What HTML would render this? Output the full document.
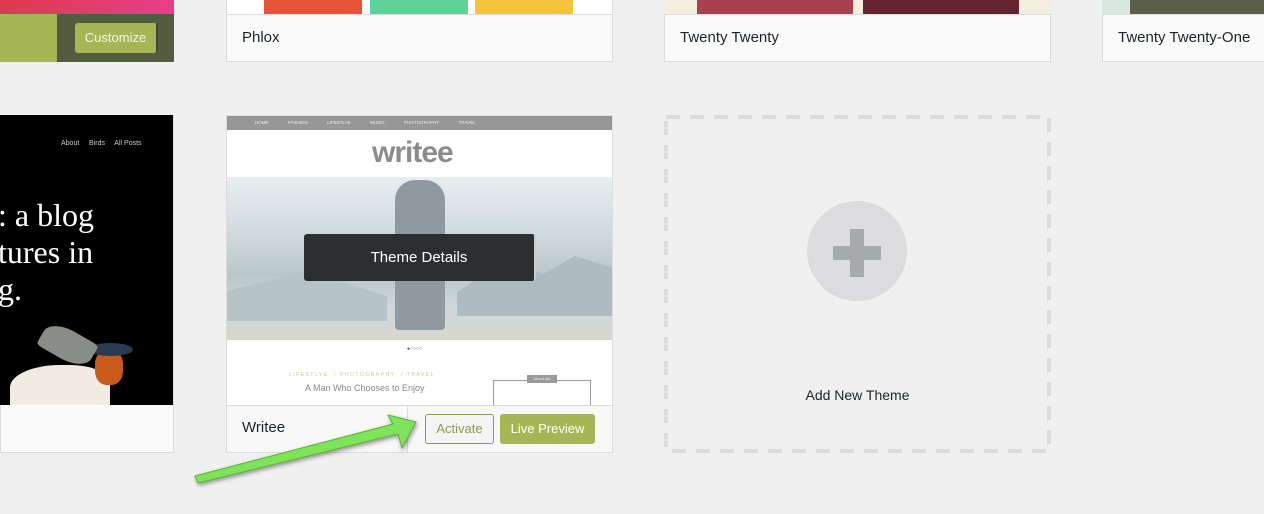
<!DOCTYPE html>
<html><head><style>
body{margin:0;width:1264px;height:514px;background:#f0f0f1;position:relative;overflow:hidden;font-family:"Liberation Sans",sans-serif}
.a{position:absolute;box-sizing:border-box}
.card{border:1px solid #dcdcde;background:#fafafa}
.name{font-size:15px;color:#1d2327;}
</style></head><body>
<div class="a" style="left:0;top:0;width:174px;height:14px;background:linear-gradient(110deg,#dd3a4a,#e83e8c)"></div>
<div class="a" style="left:0;top:14px;width:57px;height:48px;background:#a7b654"></div>
<div class="a" style="left:57px;top:14px;width:117px;height:48px;background:#535c3f"></div>
<div class="a" style="left:75px;top:23px;width:83px;height:30px;background:#a7b654;border-radius:3px;color:#f4f6e8;font-size:13px;line-height:30px;text-align:center;border-right:2px solid #444">Customize</div>
<div class="a" style="left:226px;top:0;width:387px;height:15px;background:#fff;border:1px solid #dcdcde;border-top:0"></div>
<div class="a" style="left:264px;top:0;width:98px;height:14px;background:#e4543a"></div>
<div class="a" style="left:370px;top:0;width:98px;height:14px;background:#5fd29a"></div>
<div class="a" style="left:475px;top:0;width:98px;height:14px;background:#f4c43e"></div>
<div class="a card" style="left:226px;top:14px;width:387px;height:48px"><div class="name" style="position:absolute;left:15px;top:14px">Phlox</div></div>
<div class="a" style="left:664px;top:0;width:387px;height:15px;background:#f3eedf"></div>
<div class="a" style="left:697px;top:0;width:156px;height:14px;background:#a8404f"></div>
<div class="a" style="left:863px;top:0;width:156px;height:14px;background:#632430"></div>
<div class="a card" style="left:664px;top:14px;width:387px;height:48px"><div class="name" style="position:absolute;left:15px;top:14px">Twenty Twenty</div></div>
<div class="a" style="left:1102px;top:0;width:162px;height:15px;background:#d9e8de"></div>
<div class="a" style="left:1130px;top:0;width:134px;height:14px;background:#5a5e47"></div>
<div class="a card" style="left:1102px;top:14px;width:170px;height:48px"><div class="name" style="position:absolute;left:15px;top:14px;white-space:nowrap">Twenty Twenty-One</div></div>
<div class="a" style="left:0;top:115px;width:174px;height:338px;border:1px solid #dcdcde;background:#fafafa"></div>
<div class="a" style="left:0;top:115px;width:173px;height:290px;background:#000;overflow:hidden">
<div style="position:absolute;left:61px;top:25px;color:#ccc;font-size:7px;white-space:nowrap">About &nbsp;&nbsp;&nbsp; Birds &nbsp;&nbsp;&nbsp; All Posts</div>
<div style="position:absolute;left:-2px;top:82px;color:#fff;font-family:'Liberation Serif',serif;font-size:32px;line-height:37px;white-space:nowrap">: a blog<br>tures in<br>g.</div>
<div style="position:absolute;left:10px;top:250px;width:100px;height:45px;background:#f1ece2;border-radius:50% 40% 0 0"></div>
<div style="position:absolute;left:95px;top:235px;width:28px;height:35px;background:#c85a1c;border-radius:40%"></div>
<div style="position:absolute;left:88px;top:228px;width:45px;height:13px;background:#2a3a50;border-radius:50%"></div>
<div style="position:absolute;left:40px;top:215px;width:55px;height:30px;background:#8a8c88;transform:rotate(30deg);border-radius:50% 10%"></div>
</div>
<div class="a" style="left:226px;top:115px;width:387px;height:338px;border:1px solid #dcdcde;background:#fff;overflow:hidden">
<div style="position:absolute;left:0;top:0;width:387px;height:14px;background:#979797;color:#eee;font-size:4.5px;line-height:14px;word-spacing:2px;padding-left:28px;box-sizing:border-box">HOME &nbsp;&nbsp;&nbsp;&nbsp; FASHION &nbsp;&nbsp;&nbsp;&nbsp; LIFESTLYE &nbsp;&nbsp;&nbsp;&nbsp; MUSIC &nbsp;&nbsp;&nbsp;&nbsp; PHOTOGRAPHY &nbsp;&nbsp;&nbsp;&nbsp; TRAVEL</div>
<div style="position:absolute;left:145px;top:20px;font-size:30px;font-weight:bold;color:#8c8c8c;letter-spacing:-1px">writee</div>
<div style="position:absolute;left:0;top:61px;width:387px;height:163px;background:linear-gradient(#e8eef0 0%,#d0dade 35%,#b9c6cc 60%,#cfd8db 80%,#d8d6cf 100%)"></div>
<div style="position:absolute;left:230px;top:140px;width:157px;height:60px;background:#aebcc2;clip-path:polygon(0 60%,30% 10%,55% 30%,75% 0,100% 20%,100% 100%,0 100%)"></div>
<div style="position:absolute;left:0;top:155px;width:160px;height:50px;background:#b6c4c9;clip-path:polygon(0 40%,50% 0,100% 50%,100% 100%,0 100%)"></div>
<div style="position:absolute;left:168px;top:64px;width:50px;height:150px;background:#8e9aa0;border-radius:20px 20px 4px 4px"></div>
<div style="position:absolute;left:180px;top:230px;font-size:5px;color:#555">●○○○○</div>
<div style="position:absolute;left:62px;top:256px;font-size:5px;color:#e0c08a;letter-spacing:1.5px">LIFESTLYE &nbsp;/ PHOTOGRAPHY &nbsp;/ TRAVEL</div>
<div style="position:absolute;left:78px;top:267px;font-size:9px;color:#888">A Man Who Chooses to Enjoy</div>
<div style="position:absolute;left:266px;top:264px;width:96px;height:30px;border:1px solid #999;border-bottom:0"></div>
<div style="position:absolute;left:300px;top:259px;width:30px;height:8px;background:#999;color:#eee;font-size:4px;text-align:center;line-height:8px">About Me</div>
<div style="position:absolute;left:77px;top:118px;width:232px;height:47px;background:#2c2f31;border-radius:3px;color:#fff;font-size:15px;line-height:47px;text-align:center;border-right:2px solid #ccc;box-sizing:border-box">Theme Details</div>
<div style="position:absolute;left:0;top:289px;width:387px;height:49px;background:#f8f8f8;border-top:1px solid #dcdcde"></div>
<div style="position:absolute;left:180px;top:290px;width:1px;height:48px;background:#dcdcde"></div>
<div class="name" style="position:absolute;left:15px;top:303px">Writee</div>
<div style="position:absolute;left:198px;top:298px;width:69px;height:30px;border:1px solid #8c9c4a;border-radius:3px;background:#f4f4f4;color:#8c9c4a;font-size:13px;line-height:28px;text-align:center;box-sizing:border-box">Activate</div>
<div style="position:absolute;left:273px;top:298px;width:95px;height:30px;border-radius:3px;background:#a7b654;color:#fff;font-size:13px;line-height:30px;text-align:center">Live Preview</div>
</div>
<svg class="a" style="left:664px;top:115px" width="387" height="338"><rect x="2" y="2" width="383" height="334" fill="none" stroke="#dcdcde" stroke-width="4" stroke-dasharray="14 10"/></svg>
<div class="a" style="left:807px;top:201px;width:100px;height:100px;border-radius:50%;background:#dcdcde"></div>
<div class="a" style="left:850px;top:229px;width:14px;height:48px;background:#a7aaad"></div>
<div class="a" style="left:833px;top:246px;width:48px;height:14px;background:#a7aaad"></div>
<div class="a" style="left:664px;top:387px;width:387px;text-align:center;font-size:14px;color:#1d2327">Add New Theme</div>
<svg class="a" style="left:0;top:0" width="1264" height="514"><path d="M195,476 L393,424 L388,415 L416,422 L402,448 L398,434 L198,483 Z" fill="#7fe35a" stroke="#5cb43c" stroke-width="1" stroke-linejoin="round" style="filter:drop-shadow(1px 2px 2px rgba(0,0,0,.4))"/></svg>
</body></html>
